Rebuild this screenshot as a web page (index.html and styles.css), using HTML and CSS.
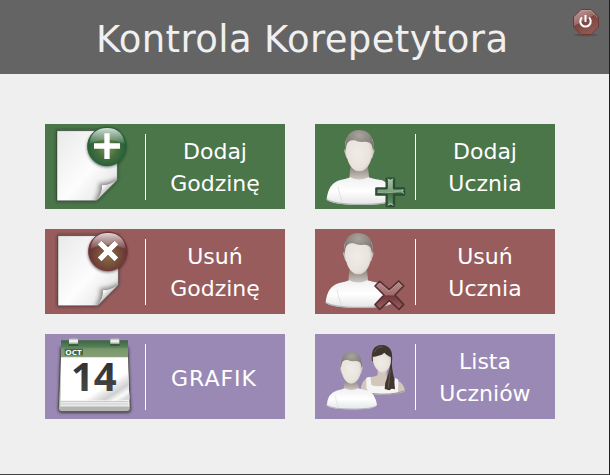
FILE: index.html
```
<!DOCTYPE html>
<html lang="pl">
<head>
<meta charset="utf-8">
<title>Kontrola Korepetytora</title>
<link rel="stylesheet" href="styles.css">
</head>
<body>
<svg class="defs" aria-hidden="true">
  <defs>
    <linearGradient id="paper" x1="0" y1="0" x2="1" y2="1"><stop offset="0" stop-color="#e9e9e9"/><stop offset=".55" stop-color="#fdfdfd"/><stop offset="1" stop-color="#ddd"/></linearGradient>
    <linearGradient id="fold" x1="0" y1="0" x2="1" y2="1"><stop offset=".1" stop-color="#c5c5c5"/><stop offset=".3" stop-color="#fff"/><stop offset=".6" stop-color="#aaa"/></linearGradient>
    <radialGradient id="green-ball" cx=".5" cy=".55"><stop offset="0" stop-color="#7b9550"/><stop offset=".5" stop-color="#48703f"/><stop offset="1" stop-color="#245f38"/></radialGradient>
    <radialGradient id="red-ball" cx=".5" cy=".6"><stop offset="0" stop-color="#8b7043"/><stop offset=".55" stop-color="#75503a"/><stop offset="1" stop-color="#6b3035"/></radialGradient>
    <linearGradient id="gloss" x1="0" y1="0" x2="0" y2="1"><stop offset="0" stop-color="#fff" stop-opacity=".8"/><stop offset="1" stop-color="#fff" stop-opacity=".08"/></linearGradient>
    <linearGradient id="shirt" x1="0" y1="0" x2="0" y2="1"><stop offset="0" stop-color="#f0f0f2"/><stop offset=".5" stop-color="#fff"/><stop offset="1" stop-color="#e4e5e7"/></linearGradient>
    <radialGradient id="face" cx=".45" cy=".5" r=".6"><stop offset="0" stop-color="#f0ede6"/><stop offset=".7" stop-color="#e8e4dd"/><stop offset="1" stop-color="#c8c1b9"/></radialGradient>
    <linearGradient id="neck" x1="0" y1="0" x2="0" y2="1"><stop offset="0" stop-color="#8f8780"/><stop offset="1" stop-color="#dcd8d3"/></linearGradient>
    <radialGradient id="hair" cx=".5" cy=".25" r=".7"><stop offset="0" stop-color="#aaa49e"/><stop offset="1" stop-color="#756f69"/></radialGradient>
    <linearGradient id="plus" x1="0" y1="0" x2="0" y2="1"><stop offset="0" stop-color="#a9c2a8"/><stop offset=".48" stop-color="#7b9f7b"/><stop offset=".53" stop-color="#426d48"/><stop offset="1" stop-color="#6c9770"/></linearGradient>
    <linearGradient id="cross" x1="0" y1="0" x2="0" y2="1"><stop offset="0" stop-color="#b98f8d"/><stop offset=".48" stop-color="#a06b6a"/><stop offset=".53" stop-color="#71383a"/><stop offset="1" stop-color="#9d6262"/></linearGradient>
    <linearGradient id="cal-head" x1="0" y1="0" x2="0" y2="1"><stop offset="0" stop-color="#3c6440"/><stop offset=".4" stop-color="#58805a"/><stop offset=".5" stop-color="#789769"/><stop offset="1" stop-color="#88a078"/></linearGradient>
    <linearGradient id="cal-page" x1="0" y1="0" x2="1" y2="1"><stop offset=".65" stop-color="#fff"/><stop offset=".8" stop-color="#d0d0d0"/><stop offset=".88" stop-color="#fafafa"/><stop offset="1" stop-color="#bbb"/></linearGradient>
    <linearGradient id="digits" x1="0" y1="0" x2="0" y2="1"><stop offset="0" stop-color="#262626"/><stop offset="1" stop-color="#505050"/></linearGradient>
    <linearGradient id="ring" x1="0" y1="0" x2="0" y2="1"><stop offset="0" stop-color="#aaa"/><stop offset=".5" stop-color="#fff"/><stop offset="1" stop-color="#999"/></linearGradient>
    <linearGradient id="power" x1="0" y1="0" x2=".55" y2="1"><stop offset="0" stop-color="#c3a5a2"/><stop offset=".5" stop-color="#9b6a66"/><stop offset=".53" stop-color="#7c443f"/><stop offset="1" stop-color="#925953"/></linearGradient>
    <filter id="soft" x="-30%" y="-30%" width="160%" height="160%"><feGaussianBlur stdDeviation="4"/></filter>
    <filter id="softer" x="-50%" y="-50%" width="200%" height="200%"><feGaussianBlur stdDeviation="6"/></filter>
    <clipPath id="sheet-clip"><path d="M36 32H217V179L154 242H36Z"/></clipPath>
    <g id="sheet">
      <path d="M36 32H217V179L154 242H36Z" fill="none" stroke="#222" stroke-opacity=".55" stroke-width="6" filter="url(#soft)"/>
      <path d="M36 32H217V179L154 242H36Z" fill="url(#paper)" stroke="#111" stroke-opacity=".35" stroke-width="3"/>
      <g clip-path="url(#sheet-clip)"><path d="M154 242Q168 218 167 194Q192 194 217 179L217 242Z" fill="#333" opacity=".6" stroke="#555" stroke-width="10" filter="url(#softer)"/></g>
      <path d="M154 242Q173 218 171 196Q196 195 217 179Z" fill="url(#fold)"/>
    </g>
    <g id="man">
      <path d="M106 142H159L164 188H102Z" fill="url(#neck)"/>
      <path d="M106 172Q133 185 160 172Q178 178 202 181Q226 190 235 236Q231 254 136 254Q54 254 35 239Q39 190 76 180Q94 177 106 172Z" fill="url(#shirt)"/>
      <path d="M35 236Q60 251 136 251Q220 251 235 236Q231 255 136 255Q54 255 35 239Z" fill="#b4b7ba"/>
      <path d="M69 201Q73 223 83 248" fill="none" stroke="#d4d5d8" stroke-width="2"/>
      <path d="M91 87Q86 86 88 95L94 114L101 110M175 87Q180 86 178 95L172 114L165 110" fill="#c4bdb5"/>
      <path d="M91 66Q96 43 133 43Q170 43 175 66Q177 104 165 128Q153 154 133 154Q113 154 101 128Q90 104 91 66Z" fill="url(#face)"/>
      <path d="M91 96Q86 30 133 30Q180 31 175 94L171 77Q168 65 149 65Q134 69 119 61Q97 59 94 78Z" fill="url(#hair)"/>
    </g>
  </defs>
</svg>
<main class="window">
  <header class="header">
    <h1 class="title">Kontrola Korepetytora</h1>
    <button class="power" aria-label="Zamknij">
      <svg viewBox="0 0 28 30">
        <ellipse cx="14" cy="27" rx="12" ry="1.5" fill="#444" opacity=".5"/>
        <path d="M9 1.500H19L26.500 9V19L19 26.500H9L1.500 19V9Z" fill="url(#power)" stroke="#6e3934"/>
        <path d="M9.400 2.500H18.600L25.500 9.400" fill="none" stroke="#c99f9b" stroke-width=".7"/>
        <path d="M10 9.500A5.200 5.200 0 1 0 17 9.500M13.500 7V14" fill="none" stroke="#fff" stroke-width="2"/>
      </svg>
    </button>
  </header>
  <nav class="grid">
    <button class="tile green">
      <svg class="icon" viewBox="0 12 300 255">
        <use href="#sheet"/>
        <circle cx="185" cy="83" r="58" fill="#152d1b" opacity=".7" filter="url(#soft)"/>
        <circle cx="186" cy="79" r="58" fill="url(#green-ball)" stroke="#2b613a" stroke-width="3"/>
        <path d="M133 72Q138 25 186 24Q234 25 239 72Q185 48 133 72Z" fill="url(#gloss)"/>
        <path d="M178 40H194V70H225V86H194V117H178V86H147V70H178Z" fill="#fff"/>
      </svg>
      <span class="label">Dodaj<br>Godzinę</span>
    </button>
    <button class="tile green">
      <svg class="icon" viewBox="0 12 300 255">
        <use href="#man"/>
        <path d="M215 176H237V205H267V224H237V258H215V224H184V205H215Z" fill="url(#plus)" stroke="#2b4d32" stroke-width="7" stroke-linejoin="round"/>
        <path d="M218 177L226 181L235 177M266 209L262 215L266 221M218 256L226 251L235 256" fill="none" stroke="#bcd0bb" stroke-width="3"/>
        <path d="M187 217Q230 222 264 209" fill="none" stroke="#91b092" stroke-width="3"/>
      </svg>
      <span class="label">Dodaj<br>Ucznia</span>
    </button>
    <button class="tile red">
      <svg class="icon" viewBox="0 12 300 255">
        <use href="#sheet" x="3"/>
        <circle cx="188" cy="83" r="58" fill="#321719" opacity=".75" filter="url(#soft)"/>
        <circle cx="189" cy="79" r="58" fill="url(#red-ball)" stroke="#713c3f" stroke-width="3"/>
        <path d="M136 72Q141 25 189 24Q237 25 242 72Q188 48 136 72Z" fill="url(#gloss)"/>
        <path d="M164 53L214 103M214 53L164 103" stroke="#66423a" stroke-width="19"/>
        <path d="M164 53L214 103M214 53L164 103" stroke="#fff" stroke-width="16"/>
      </svg>
      <span class="label">Usuń<br>Godzinę</span>
    </button>
    <button class="tile red">
      <svg class="icon" viewBox="0 12 300 255">
        <use href="#man" x="-3" y="-6"/>
        <path d="M194 169L223 194L251 168L266 183L240 210L266 239L252 253L223 227L194 253L180 239L207 210L180 183Z" fill="url(#cross)" stroke="#562e31" stroke-width="5" stroke-linejoin="round"/>
        <path d="M186 182L195 174L222 199L251 173L261 183" fill="none" stroke="#c49d9c" stroke-width="2"/>
        <path d="M218 238L223 231L229 238" fill="#ddd"/>
      </svg>
      <span class="label">Usuń<br>Ucznia</span>
    </button>
    <button class="tile violet">
      <svg class="icon" viewBox="0 12 300 255">
        <path d="M46 50H250L257 241Q257 248 248 248H49Q40 248 40 240Z" fill="#222" opacity=".8" filter="url(#soft)"/>
        <path d="M47 70H249L256 235Q256 245 246 245H50Q40 245 40 235Z" fill="#b2b5b0" stroke="#50544f" stroke-width="3"/>
        <path d="M48 82H249L253 231H46Z" fill="#f2f2f2"/>
        <path d="M47 215H250M47 222H250M47 229H251" stroke="#999" stroke-width="1.500"/>
        <path d="M48 81H249Q248 158 255 208Q220 215 172 211H48Z" fill="url(#cal-page)"/>
        <path d="M48 31H249V82H48Z" fill="url(#cal-head)"/>
        <path d="M59 56H114V76H59Z" fill="#426846"/>
        <path d="M72 42V29Q72 25 77 25H94Q99 25 99 29V42M196 42V29Q196 25 201 25H218Q223 25 223 29V42" fill="url(#ring)"/>
        <path d="M71 42H100V48H71ZM195 42H224V48H195Z" fill="#395d3d"/>
        <text class="month" x="61" y="74" textLength="49" lengthAdjust="spacingAndGlyphs">OCT</text>
        <text class="day" x="78" y="184" fill="url(#digits)">14</text>
      </svg>
      <span class="label caps">GRAFIK</span>
    </button>
    <button class="tile violet">
      <svg class="icon" viewBox="0 12 300 255">
        <path d="M188 121H215V143Q226 151 254 155Q269 166 270 185Q232 197 175 192L137 181Q139 151 160 142Q179 141 188 135Z" fill="#d3c7bc"/>
        <path d="M154 143L166 140L170 166Q209 172 238 159L241 143L250 149L249 188Q211 196 165 192L154 175Z" fill="#f4f4f4"/>
        <path d="M165 190Q231 198 270 182" fill="none" stroke="#9e9693" stroke-width="3"/>
        <path d="M167 141Q190 151 214 142L214 166Q190 172 170 165Z" fill="#d3c7bc"/>
        <path d="M171 94Q165 45 201 45Q236 46 231 94Q229 111 237 143L240 178L230 176L223 181L209 177Q209 158 217 140Q225 119 228 83Z" fill="#41362f"/>
        <path d="M173 80Q181 81 190 77Q202 75 208 68Q216 77 228 82Q230 107 216 122Q203 134 190 122Q173 108 173 80Z" fill="url(#face)"/>
        <path d="M178 67Q185 49 204 51M226 118Q223 144 220 173" fill="none" stroke="#695a4d" stroke-width="3"/>
        <use href="#man" transform="translate(8.600 43) scale(.755 .768)"/>
      </svg>
      <span class="label">Lista<br>Uczniów</span>
    </button>
  </nav>
</main>
</body>
</html>
```
FILE: styles.css
```
* { box-sizing: border-box; }
body {
  margin: 0;
  font-family: Verdana, "DejaVu Sans", sans-serif;
  background: #efefef;
}
.defs { position: absolute; width: 0; height: 0; }
.window {
  height: 475px;
  border-right: 1px solid #202020;
  border-bottom: 1px solid #404040;
  overflow: hidden;
}
.header {
  position: relative;
  height: 74px;
  background: #646464;
  padding-left: 96px;
}
.title {
  margin: 0;
  font-size: 37px;
  line-height: 79px;
  font-weight: 400;
  letter-spacing: .37px;
  color: #f0f0f0;
  white-space: nowrap;
}
button { border: 0; padding: 0; font: inherit; background: none; }
.power {
  position: absolute;
  top: 8px;
  right: 9px;
  width: 28px;
  height: 30px;
}
.power svg { display: block; width: 28px; height: 30px; }
.grid {
  display: grid;
  grid-template-columns: 240px 240px;
  grid-auto-rows: 85px;
  gap: 20px 30px;
  padding: 50px 45px;
}
.tile { display: flex; align-items: center; color: #fff; }
.green { background: #4a764a; }
.red { background: #985c5c; }
.violet { background: #9a89b5; }
.icon { width: 100px; height: 85px; flex: none; }
.label {
  display: flow-root;
  flex: 1;
  height: 66px;
  padding: 2px 1px 0 0;
  border-left: 1px solid #fff;
  font-size: 22px;
  line-height: 32px;
  text-align: center;
  align-content: center;
}
.caps { padding: 4px 3px 0 0; letter-spacing: 1px; }
.month { font: 700 21px "Open Sans", sans-serif; fill: #fff; }
.day { font: 700 120px "Open Sans", sans-serif; }
```
